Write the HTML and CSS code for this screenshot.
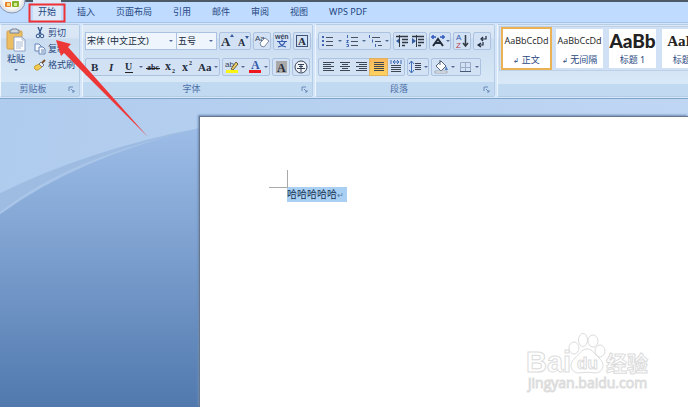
FILE: index.html
```html
<!DOCTYPE html>
<html lang="zh-CN">
<head>
<meta charset="utf-8">
<title>文档</title>
<link rel="stylesheet" href="styles.css">
</head>
<body>
<header class="top">
  <div class="titlebar"></div>
  <button class="office" aria-label="Office">
    <svg width="32" height="16" viewBox="0 0 32 16"><ellipse cx="12" cy="1" rx="13" ry="12" fill="#e4e8ed" stroke="#8597b4"/><ellipse cx="12" cy="-1" rx="10" ry="11" fill="#f8f8f2"/><rect x="5" y="2" width="6" height="5" rx="1" fill="#e58332"/><rect x="7" y="3" width="3" height="3" fill="#ffd98a"/><rect x="12" y="1" width="7" height="6" rx="1" fill="#84b32f"/><rect x="14" y="3" width="3" height="3" fill="#d7ed92"/></svg>
  </button>
  <nav class="tabs">
    <a href="#" class="current">开始</a><a href="#">插入</a><a href="#">页面布局</a><a href="#">引用</a><a href="#">邮件</a><a href="#">审阅</a><a href="#">视图</a><a href="#">WPS PDF</a>
  </nav>
</header>

<div class="ribbon">
  <section class="group clipboard">
    <div class="body">
      <button class="paste">
        <svg width="20" height="24" viewBox="0 0 20 24"><rect x="1" y="3" width="15" height="18" rx="1" fill="#edbd62" stroke="#d3a04c"/><path d="M4 5V2h2V1h5v1h2v3z" fill="#d3d8df" stroke="#77849a"/><path d="M8 9h8l3 3v11H8z" fill="#fff" stroke="#8ba3c7"/><path d="M16 9v3h3M10 14h7M10 16h7M10 18h7M10 20h5" fill="none" stroke="#a9bad4"/></svg>
        <span>粘贴</span><i class="caret"></i>
      </button>
      <div class="commands">
        <button><svg width="12" height="12" viewBox="0 0 12 12" fill="none" stroke="#31548c"><path d="M4 0l3 7M8 0L5 7" stroke-width="1.3"/><circle cx="4" cy="9" r="1.8"/><circle cx="8" cy="9" r="1.8"/></svg>剪切</button>
        <button><svg width="12" height="12" viewBox="0 0 12 12" fill="#f5f9ff" stroke="#6784b5"><path d="M1 1h4l2 2v5H1z"/><path d="M5 4h4l2 2v5H5z"/><path d="M7 7h3M7 9h3"/></svg>复制</button>
        <button><svg width="12" height="12" viewBox="0 0 12 12"><path d="M1 7l4-2 3 3-4 3H2L0 9z" fill="#f2cc50" stroke="#c59b37"/><path d="M5 5l2-2 3 3-2 2z" fill="#e9edf4" stroke="#747b8c"/><path d="M8 4l3-3" stroke="#80542f" stroke-width="2"/></svg>格式刷</button>
      </div>
    </div>
    <footer>剪贴板<svg class="launch" viewBox="0 0 7 7"><path d="M1 5V1h4M3 3l3 3M6 4v2H4"/></svg></footer>
  </section>

  <section class="group font">
    <div class="body rows">
      <div class="row">
        <div class="combos">
          <div class="combo name"><select aria-label="字体"><option>宋体 (中文正文)</option></select><i class="caret"></i></div>
          <div class="combo size"><select aria-label="字号"><option>五号</option></select><i class="caret"></i></div>
        </div>
        <div class="cluster scale"><button aria-label="增大字体"><svg viewBox="0 0 16 16"><text class="serif" x="1" y="13" font-size="13">A</text><path d="M10 4l2-3 2 3z" fill="#345a9c"/></svg></button><button aria-label="缩小字体"><svg viewBox="0 0 16 16"><text class="serif" x="3" y="13" font-size="10">A</text><path d="M10 3h4l-2 3z" fill="#345a9c"/></svg></button></div>
        <div class="cluster"><button aria-label="清除格式"><svg viewBox="0 0 16 16"><text class="sans" x="1" y="8" font-size="8">Aa</text><path d="M6 10l5-5 4 3-5 6-3-1z" fill="#fff" stroke="#7b89a5"/></svg></button></div>
        <div class="cluster"><button aria-label="拼音指南"><svg viewBox="0 0 16 16"><text class="sans strong" x="1" y="6" font-size="7">wén</text><path d="M3 8.500h10M8 6.500v2M5 9q2 4 7 5M11 9q-2 4-7 5" fill="none" stroke="#3459ad" stroke-width="1.200"/></svg></button></div>
        <div class="cluster"><button aria-label="字符边框"><svg viewBox="0 0 16 16"><rect x="2.500" y="2.500" width="11" height="11" fill="none" stroke="#425477"/><text class="serif" x="4" y="12" font-size="11">A</text></svg></button></div>
      </div>
      <div class="row">
        <div class="cluster styles-cluster">
          <button aria-label="加粗"><svg viewBox="0 0 16 16"><text class="serif" x="4" y="12" font-size="11">B</text></svg></button>
          <button aria-label="倾斜"><svg viewBox="0 0 16 16"><text class="serif italic" x="5" y="12" font-size="11">I</text></svg></button>
          <button class="drop" aria-label="下划线"><svg viewBox="0 0 16 16"><text class="serif" x="4" y="11" font-size="10">U</text><path d="M4 13.500h8" stroke="#222"/></svg><i class="caret"></i></button>
          <button aria-label="删除线"><svg viewBox="0 0 16 16"><text class="serif" x="2" y="11" font-size="8">abc</text><path d="M1 9.500h14" stroke="#222"/></svg></button>
          <button aria-label="下标"><svg viewBox="0 0 16 16"><text class="serif" x="3" y="11" font-size="12">x</text><text class="serif" x="10" y="14" font-size="6">2</text></svg></button>
          <button aria-label="上标"><svg viewBox="0 0 16 16"><text class="serif" x="3" y="12" font-size="12">x</text><text class="serif" x="10" y="6" font-size="6">2</text></svg></button>
          <button class="drop" aria-label="更改大小写"><svg viewBox="0 0 16 16"><text class="serif" x="2" y="12" font-size="11">Aa</text></svg><i class="caret"></i></button>
        </div>
        <div class="cluster marks"><button class="drop" aria-label="突出显示"><svg viewBox="0 0 16 16"><text class="sans" x="1" y="8" font-size="8">ab</text><path d="M7 10l5-7 2 2-5 6z" fill="#f0d169" stroke="#665a36"/><path d="M2 11h12v3H2z" fill="#f9f414"/></svg><i class="caret"></i></button><button class="drop" aria-label="字体颜色"><svg viewBox="0 0 16 16"><text class="serif blue" x="4" y="10" font-size="12">A</text><path d="M2 11h12v3H2z" fill="#ee1720"/></svg><i class="caret"></i></button></div>
        <div class="cluster"><button aria-label="字符底纹"><svg viewBox="0 0 16 16"><path d="M3 2h11v12H3z" fill="#aaa9aa"/><text class="serif" x="4" y="13" font-size="12">A</text></svg></button></div>
        <div class="cluster"><button aria-label="带圈字符"><svg viewBox="0 0 16 16"><circle cx="8" cy="8" r="6" fill="#f1f4f8" stroke="#344156"/><path d="M5 5.500h6M8 5v8M4 9.500h8M6 7.500h4" stroke="#344156"/></svg></button></div>
      </div>
    </div>
    <footer>字体<svg class="launch" viewBox="0 0 7 7"><path d="M1 5V1h4M3 3l3 3M6 4v2H4"/></svg></footer>
  </section>

  <section class="group paragraph">
    <div class="body rows">
      <div class="row">
        <div class="cluster lists">
          <button class="drop" aria-label="项目符号"><svg viewBox="0 0 16 16"><path d="M2 3h2v2H2zM2 7h2v2H2zM2 11h2v2H2z" fill="#4066af"/><path d="M6 4.500h7M6 8.500h7M6 12.500h7" stroke="#4a5262"/></svg><i class="caret"></i></button>
          <button class="drop" aria-label="编号"><svg viewBox="0 0 16 16"><path d="M3.500 2v3M2.500 7.500h2l-2 2h2M2.500 11.500h2v2h-2" fill="none" stroke="#4066af"/><path d="M7 4.500h7M7 8.500h7M7 12.500h7" stroke="#4a5262"/></svg><i class="caret"></i></button>
          <button class="drop" aria-label="多级列表"><svg viewBox="0 0 16 16"><path d="M2.500 2v3M5.500 6.500v3M8.500 11v3" stroke="#4066af"/><path d="M5 4.500h8M8 8.500h6M11 12.500h4" stroke="#4a5262"/></svg><i class="caret"></i></button>
        </div>
        <div class="cluster"><button aria-label="减少缩进"><svg viewBox="0 0 16 16"><path d="M2 3.500h12M8 6.500h6M8 9.500h6M8 12.500h3" stroke="#303844" stroke-width="1.500"/><path d="M6 5v6L2 8z" fill="#345da5"/><path d="M5.500 2v12" stroke="#303844"/></svg></button><button aria-label="增加缩进"><svg viewBox="0 0 16 16"><path d="M2 3.500h12M8 6.500h6M8 9.500h6M8 12.500h3" stroke="#303844" stroke-width="1.500"/><path d="M2 5v6l4-3z" fill="#345da5"/><path d="M6.500 2v12" stroke="#303844"/></svg></button></div>
        <div class="cluster"><button class="drop tight" aria-label="中文版式"><svg viewBox="0 0 16 16"><path d="M3 13l5-7 5 7M5 10h6" fill="none" stroke="#222c3a" stroke-width="2"/><path d="M1 4h5M3 2v4M10 4h5M13 2v4" stroke="#3359bc" stroke-width="1.500"/></svg><i class="caret"></i></button></div>
        <div class="cluster"><button aria-label="排序"><svg viewBox="0 0 16 16"><text class="sans blue" x="2" y="7" font-size="8">A</text><text class="sans red" x="2" y="15" font-size="8">Z</text><path d="M11.500 2v11M9 10l2.500 3 2.500-3" fill="none" stroke="#333b49" stroke-width="1.500"/></svg></button></div>
        <div class="cluster"><button aria-label="显示编辑标记"><svg viewBox="0 0 16 16"><path d="M12 3v3H8M9 4L7 6l2 2M9 9v3H5M7 10l-3 2 3 2" fill="none" stroke="#202b3c" stroke-width="1.200"/></svg></button></div>
      </div>
      <div class="row">
        <div class="cluster aligns">
          <button aria-label="左对齐"><svg viewBox="0 0 16 16"><path class="bars" d="M3 3.500h11M3 5.500h8M3 7.500h11M3 9.500h8M3 11.500h11"/></svg></button>
          <button aria-label="居中"><svg viewBox="0 0 16 16"><path class="bars" d="M3 3.500h10M5 5.500h6M3 7.500h10M5 9.500h6M3 11.500h10"/></svg></button>
          <button aria-label="右对齐"><svg viewBox="0 0 16 16"><path class="bars" d="M2 3.500h11M5 5.500h8M2 7.500h11M5 9.500h8M2 11.500h11"/></svg></button>
          <button class="on" aria-label="两端对齐"><svg viewBox="0 0 16 16"><path class="bars" d="M3 3.500h10M3 5.500h10M3 7.500h10M3 9.500h10M3 11.500h10"/></svg></button>
          <button aria-label="分散对齐"><svg viewBox="0 0 16 16"><path d="M3 1v4M13 1v4M5 3h6M7 1L5 3l2 2M9 1l2 2-2 2" fill="none" stroke="#4068b3"/><path class="bars" d="M3 6.500h10M3 8.500h10M3 10.500h10M3 12.500h10"/></svg></button>
        </div>
        <div class="cluster"><button class="drop tight" aria-label="行距"><svg viewBox="0 0 16 16"><path d="M3.500 2v12M1 5l2.500-3L6 5M1 11l2.500 3L6 11" fill="none" stroke="#3f6fb7"/><path d="M7 4.500h6M7 6.500h6M7 8.500h6M7 10.500h6" stroke="#3c4350"/></svg><i class="caret"></i></button></div>
        <div class="cluster"><button class="drop" aria-label="底纹"><svg viewBox="0 0 16 16"><path d="M3 7l5-5 5 5-5 5z" fill="#fff" stroke="#52647f"/><path d="M7 1v5" stroke="#52647f"/><path d="M13 7l2 4h-3z" fill="#4a78bd"/><path d="M2 12h12v2H2z" fill="#fff" stroke="#9ba5b5"/></svg><i class="caret"></i></button><button class="drop" aria-label="边框"><svg viewBox="0 0 16 16"><path d="M3.500 3.500h10v9h-10zM8.500 3v9M3 8.500h10" fill="none" stroke="#9aacc8"/><path d="M3 12.500h11" stroke="#465976"/></svg><i class="caret"></i></button></div>
      </div>
    </div>
    <footer>段落<svg class="launch" viewBox="0 0 7 7"><path d="M1 5V1h4M3 3l3 3M6 4v2H4"/></svg></footer>
  </section>

  <section class="group gallery-group">
    <div class="gallery">
      <button class="style selected"><span class="sample">AaBbCcDd</span><span><small>↲</small> 正文</span></button>
      <button class="style"><span class="sample">AaBbCcDd</span><span><small>↲</small> 无间隔</span></button>
      <button class="style"><span class="sample h1">AaBb</span><span>标题 1</span></button>
      <button class="style"><span class="sample h2">AaBb</span><span>标题 2</span></button>
    </div>
    <footer></footer>
  </section>
</div>

<main class="desk">
  <svg class="waves" viewBox="0 0 200 307" preserveAspectRatio="none" aria-hidden="true">
    <defs><linearGradient id="deep" x1="0" y1="0" x2="0" y2="1"><stop offset="0" stop-color="#9dbde7"/><stop offset=".35" stop-color="#83a6d4"/><stop offset="1" stop-color="#5179ae"/></linearGradient></defs>
    <path d="M0 94Q90 50 200 29V120H0z" fill="#9ebce2"/>
    <path d="M0 113Q70 57 200 30V120H0z" fill="#a9c5e8"/>
    <path d="M0 115Q78 58 200 29V307H0z" fill="url(#deep)"/>
  </svg>
  <article class="sheet"><p><span class="picked">哈哈哈哈哈<small>↵</small></span></p></article>
  <svg class="watermark" width="126" height="62" viewBox="0 0 126 62">
    <g fill="#fff" stroke="#dcdcdc" stroke-width="1">
      <text class="brand" x="0" y="39" font-size="29">Bai</text>
      <ellipse cx="48" cy="15" rx="5" ry="6"/><ellipse cx="57" cy="7" rx="4.500" ry="6.500"/><ellipse cx="67" cy="8" rx="5" ry="6"/><ellipse cx="74" cy="18" rx="5" ry="6"/>
      <path d="M61 16c6 0 8 6 12 9 7 6 4 15-4 15-5-1-11-1-16 0-8 0-11-9-4-15 4-3 6-9 12-9z"/>
      <text class="brand" x="51" y="36" font-size="17">du</text>
      <text class="han" x="80" y="38" font-size="21">经验</text>
    </g>
    <text class="url" x="2" y="55" font-size="14">jingyan.baidu.com</text>
  </svg>
</main>

<svg class="callout" width="160" height="145" viewBox="0 0 160 145" aria-hidden="true"><rect x="29.500" y="4.500" width="35" height="17" fill="none" stroke="#ee3037" stroke-width="2"/><path d="M56 40l15 4-3 3 80 90-84-84-3 3z" fill="#ed3737"/></svg>
</body>
</html>
```
FILE: styles.css
```css
* { box-sizing: border-box; }
body {
  margin: 0;
  height: 100vh;
  overflow: hidden;
  display: flex;
  flex-direction: column;
  position: relative;
  background: #b5d0f0;
  color: #29487f;
  font: 9px/14px "Noto Sans", "Noto Sans CJK SC", sans-serif;
}
button, select { font: inherit; color: inherit; border: 0; margin: 0; padding: 0; background: none; }
svg { display: block; flex: none; }

.top { position: relative; background: #bfdbff; }
.titlebar { height: 2px; background: #4c5967; }
.office { position: absolute; left: 0; top: 0; }
.tabs { display: flex; gap: 21px; padding: 0 0 0 38px; height: 20px; align-items: center; }
.tabs a { color: #25467f; text-decoration: none; white-space: nowrap; }
.tabs .current { background: #dce9f8; box-shadow: 0 0 0 5px #dce9f8; }

.ribbon {
  display: flex;
  gap: 2px;
  padding: 1px 0;
  background: #d5e6fa;
  border-top: 1px solid #a4c3eb;
  border-bottom: 1px solid #7ea6cb;
  overflow: hidden;
  position: relative;
}
.group {
  display: flex;
  flex-direction: column;
  flex: none;
  height: 73px;
  border: 1px solid #b5cce5;
  border-left-color: #eef5fd;
  border-radius: 2px;
  background: linear-gradient(#dce8f5 0, #d8e5f4 13px, #c9dcf0 14px, #d8e8f7 58px);
}
.group footer {
  display: flex;
  align-items: center;
  justify-content: center;
  position: relative;
  height: 14px;
  background: #c1d9f1;
  color: #4d70a8;
}
.launch { position: absolute; right: 4px; width: 7px; height: 7px; fill: none; stroke: #6b8cb8; }
.body { flex: 1; display: flex; }
.clipboard { width: 80px; }
.clipboard footer { padding-right: 14px; }
.font { width: 231px; }
.font footer { padding-right: 12px; }
.paragraph { width: 180px; }
.paragraph footer { padding-right: 12px; }
.gallery-group { flex: 1 0 190px; }

.paste { width: 30px; display: flex; flex-direction: column; align-items: center; padding-top: 3px; }
.paste .caret { margin-top: 3px; }
.commands { display: flex; flex-direction: column; }
.commands button { display: flex; align-items: center; gap: 2px; height: 16px; padding-left: 3px; white-space: nowrap; }

.caret { width: 0; height: 0; border: 2px solid transparent; border-top-color: #526b92; border-bottom: 0; flex: none; }

.rows { flex-direction: column; gap: 8px; padding: 7px 0 0 2px; }
.row { display: flex; gap: 2px; }
.cluster { display: flex; height: 18px; border: 1px solid #abc3e0; border-radius: 2px; background: #d2e2f4; }
.cluster button { width: 16px; display: flex; align-items: center; justify-content: center; }
.cluster button.drop { width: 24px; gap: 2px; }
.cluster button.tight { width: 20px; gap: 0; }
.cluster.scale button { width: 15px; }
.marks button.drop { width: 23px; gap: 1px; }
.cluster svg { width: 16px; height: 16px; }
.styles-cluster { width: 135px; }
.styles-cluster button { width: 17px; }
.lists { width: 73px; }
.aligns { width: 87px; }
.aligns button { width: 17px; }
.aligns .on { background: linear-gradient(#f8b85c, #ffd260); box-shadow: 0 0 0 1px #e2b15f; }
.bars { stroke: #3d4653; stroke-width: 1; }
.serif { font-family: "Liberation Serif", serif; font-weight: 700; fill: #252d3c; }
.serif.italic { font-style: italic; }
.sans { font-family: "Liberation Sans", sans-serif; fill: #34435c; }
.sans.strong { font-weight: 700; }
svg .blue { fill: #3459ad; }
svg .red { fill: #ba3c52; }

.combos { display: flex; }
.combo { position: relative; display: flex; align-items: center; height: 18px; border: 1px solid #abc3e0; background: #eef5fd; color: #202b3c; }
.combo select { appearance: none; width: 100%; height: 16px; padding-left: 1px; outline: 0; }
.combo .caret { position: absolute; right: 3px; }
.name { width: 92px; }
.size { width: 40px; border-left: 0; }

.gallery { flex: 1; display: flex; gap: 6px; margin: 1px 0 13px 1px; padding: 2px; border: 1px solid #bed0e6; border-right: 0; background: #d0e1f6; }
.style { flex: none; width: 47px; height: 39px; display: flex; flex-direction: column; align-items: center; background: #fff; overflow: hidden; white-space: nowrap; }
.style:first-child { margin-left: 1px; }
.style small { font-size: 7px; }
.sample { height: 24px; line-height: 24px; color: #222; font-family: "Open Sans", sans-serif; }
.h1 { font: 900 19px/24px Lato, sans-serif; }
.h2 { font: 700 15px/24px "Liberation Serif", serif; }
.selected { box-shadow: 0 0 0 2px #eab155; }

.desk { flex: 1; min-height: 0; position: relative; display: flex; padding: 17px 0 0 199px; background: linear-gradient(100deg, #afcbed, #c1d7f4); }
.waves { position: absolute; left: 0; top: 0; width: 200px; height: 100%; }
.sheet { flex: 1; position: relative; background: #fff; border: 1px solid #68778c; border-width: 1px 0 0 1px; padding: 70px 0 0 87px; box-shadow: -1px -1px 2px #6d8cb5; }
.sheet::before { content: ""; position: absolute; left: 69px; top: 53px; width: 18px; height: 17px; border: 1px solid #a9a9a9; border-width: 0 1px 1px 0; }
.sheet p { margin: 0; }
.picked { display: inline-block; height: 15px; line-height: 15px; width: 60px; background: #a9cff3; color: #183555; font-size: 10px; white-space: nowrap; }
.picked small { font-size: 8px; color: #5579a5; }
.watermark { position: absolute; right: 36px; bottom: 12px; }
.brand { font-family: "Liberation Sans", sans-serif; font-weight: 700; }
.han { font-family: "Noto Sans CJK SC", sans-serif; font-weight: 700; }
.url { font-family: "Open Sans", sans-serif; fill: #fff; stroke: #dcdcdc; stroke-width: 1; }
.callout { position: absolute; left: 0; top: 0; pointer-events: none; }
```
